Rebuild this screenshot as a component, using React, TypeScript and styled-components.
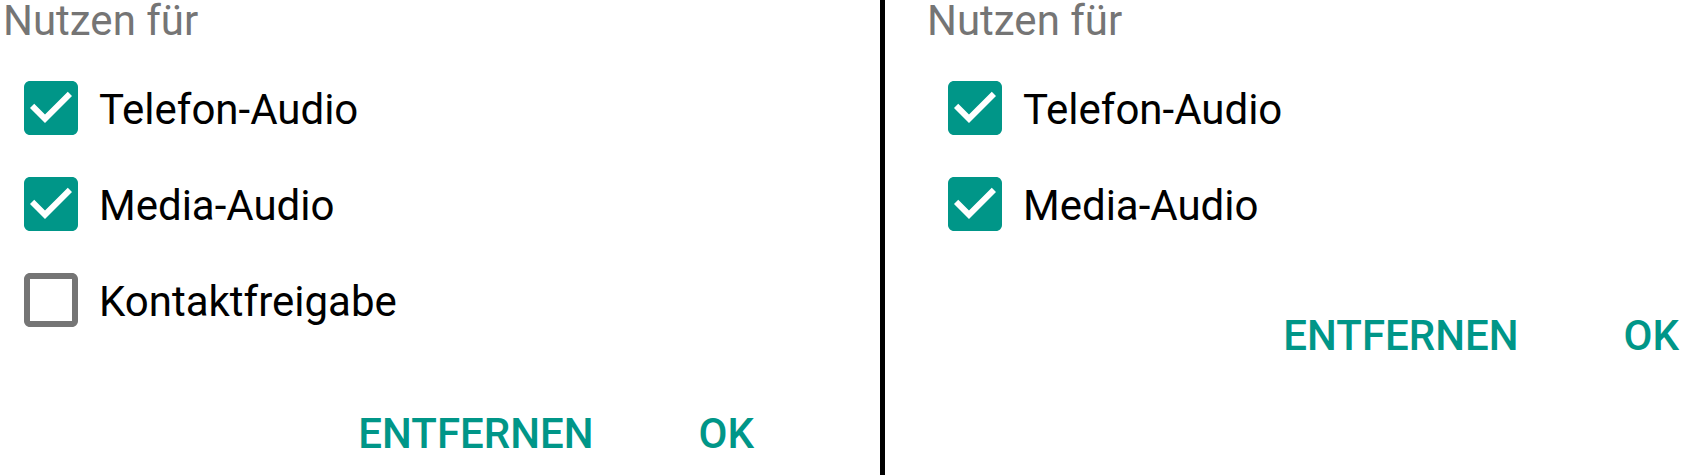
import React from 'react';
import styled, { createGlobalStyle } from 'styled-components';

const Global = createGlobalStyle`
  html, body {
    margin: 0;
    padding: 0;
    background: #ffffff;
  }
  body {
    font-family: Roboto, "Noto Sans", "Liberation Sans", sans-serif;
    -webkit-font-smoothing: antialiased;
  }
`;

const Page = styled.div`
  display: flex;
  width: 1697px;
  height: 475px;
  overflow: hidden;
  background: #ffffff;
`;

const Panel = styled.section<{ $width?: string; $padLeft: number; $padRight: number }>`
  display: flex;
  flex-direction: column;
  box-sizing: border-box;
  width: ${(p) => p.$width || 'auto'};
  flex: ${(p) => (p.$width ? '0 0 auto' : '1 1 auto')};
  padding-left: ${(p) => p.$padLeft}px;
  padding-right: ${(p) => p.$padRight}px;
`;

const Divider = styled.div`
  flex: 0 0 5px;
  background: #000000;
`;

const Title = styled.h3`
  margin: 0;
  font-size: 42px;
  line-height: 42px;
  font-weight: 400;
  color: #757575;
`;

const List = styled.ul`
  list-style: none;
  margin: 30px 0 0 12px;
  padding: 0;
  display: flex;
  flex-direction: column;
  gap: 24px;
`;

const Row = styled.li`
  display: flex;
  align-items: center;
  height: 72px;
  gap: 12px;
`;

const Label = styled.span`
  font-size: 42px;
  line-height: 72px;
  padding-top: 3px;
  color: #000000;
`;

const Actions = styled.div<{ $top: number }>`
  display: flex;
  justify-content: flex-end;
  gap: 105px;
  margin-top: ${(p) => p.$top}px;
`;

const TextButton = styled.button`
  border: 0;
  background: none;
  padding: 0;
  font-family: inherit;
  font-size: 42px;
  line-height: 52px;
  font-weight: 500;
  color: #009688;
  text-transform: uppercase;
  cursor: pointer;
`;

const CheckIcon = ({ checked }: { checked: boolean }) =>
  checked ? (
    <svg width="72" height="72" viewBox="0 0 24 24">
      <path
        fill="#009688"
        d="M19 3H5c-1.11 0-2 .9-2 2v14c0 1.1.89 2 2 2h14c1.11 0 2-.9 2-2V5c0-1.1-.89-2-2-2z"
      />
      <path fill="#ffffff" d="M10 17l-5-5 1.41-1.41L10 14.17l7.59-7.59L19 8l-9 9z" />
    </svg>
  ) : (
    <svg width="72" height="72" viewBox="0 0 24 24">
      <path
        fill="#757575"
        d="M19 5v14H5V5h14m0-2H5c-1.1 0-2 .9-2 2v14c0 1.1.9 2 2 2h14c1.1 0 2-.9 2-2V5c0-1.1-.9-2-2-2z"
      />
    </svg>
  );

type Option = { label: string; checked: boolean };

const Dialog = ({ options, actionsTop }: { options: Option[]; actionsTop: number }) => (
  <>
    <Title>Nutzen für</Title>
    <List>
      {options.map((o) => (
        <Row key={o.label}>
          <CheckIcon checked={o.checked} />
          <Label>{o.label}</Label>
        </Row>
      ))}
    </List>
    <Actions $top={actionsTop}>
      <TextButton>Entfernen</TextButton>
      <TextButton>OK</TextButton>
    </Actions>
  </>
);

const App: React.FC = () => {
  return (
    <>
      <Global />
      <Page>
        <Panel $width="880px" $padLeft={3} $padRight={126}>
          <Dialog
            actionsTop={72}
            options={[
              { label: 'Telefon-Audio', checked: true },
              { label: 'Media-Audio', checked: true },
              { label: 'Kontaktfreigabe', checked: false },
            ]}
          />
        </Panel>
        <Divider />
        <Panel $padLeft={42} $padRight={18}>
          <Dialog
            actionsTop={70}
            options={[
              { label: 'Telefon-Audio', checked: true },
              { label: 'Media-Audio', checked: true },
            ]}
          />
        </Panel>
      </Page>
    </>
  );
};

export default App;
